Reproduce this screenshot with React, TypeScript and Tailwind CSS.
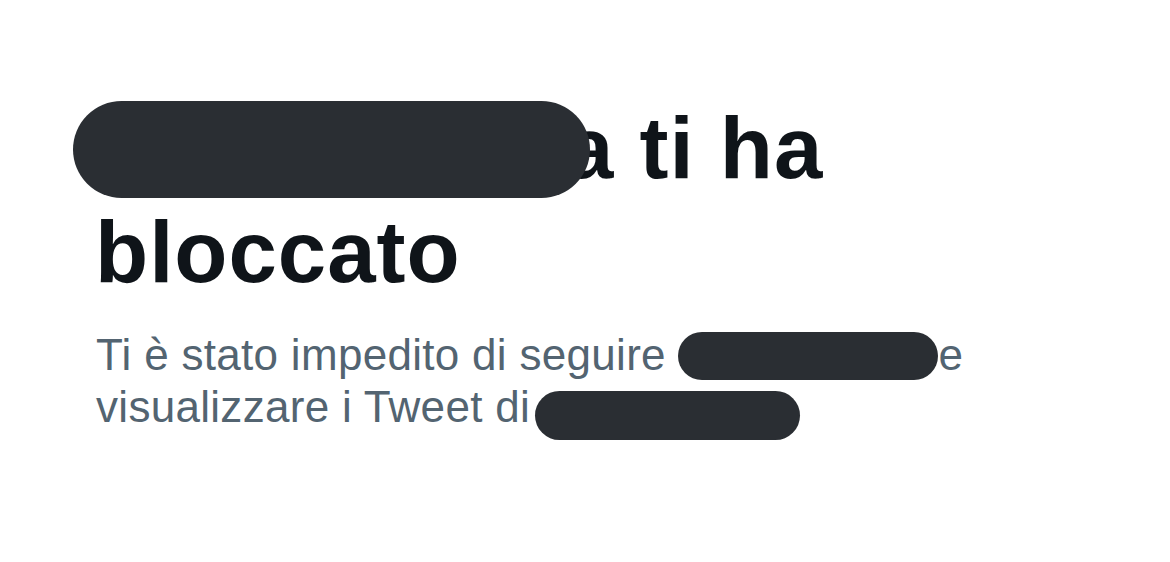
export default function App() {
  return (
    <div className="h-[562px] w-full overflow-hidden bg-white pl-[96px] pt-[96px] font-['Liberation_Sans',Arial,sans-serif]">
      <h1 className="-ml-[1px] text-[87px] font-bold leading-[104px] tracking-[1px] text-[#0f1419]">
        <span className="relative inline-block w-[470px] align-baseline">
          <span className="absolute -left-[22px] -top-[77px] z-10 h-[97px] w-[517px] rounded-full bg-[#2a2e33]" />
        </span>
        a ti ha
        <br />
        bloccato
      </h1>
      <p className="mt-[25px] w-[900px] text-[44px] leading-[52px] tracking-[0.3px] text-[#536471]">
        Ti è stato impedito di seguire{" "}
        <span className="inline-block h-[48px] w-[260px] rounded-full bg-[#2a2e33] align-[-10px]" />
        e
        <br />
        visualizzare i Tweet di{" "}
        <span className="-ml-[8px] inline-block h-[49px] w-[265px] rounded-full bg-[#2a2e33] align-[-18px]" />
      </p>
    </div>
  );
}
